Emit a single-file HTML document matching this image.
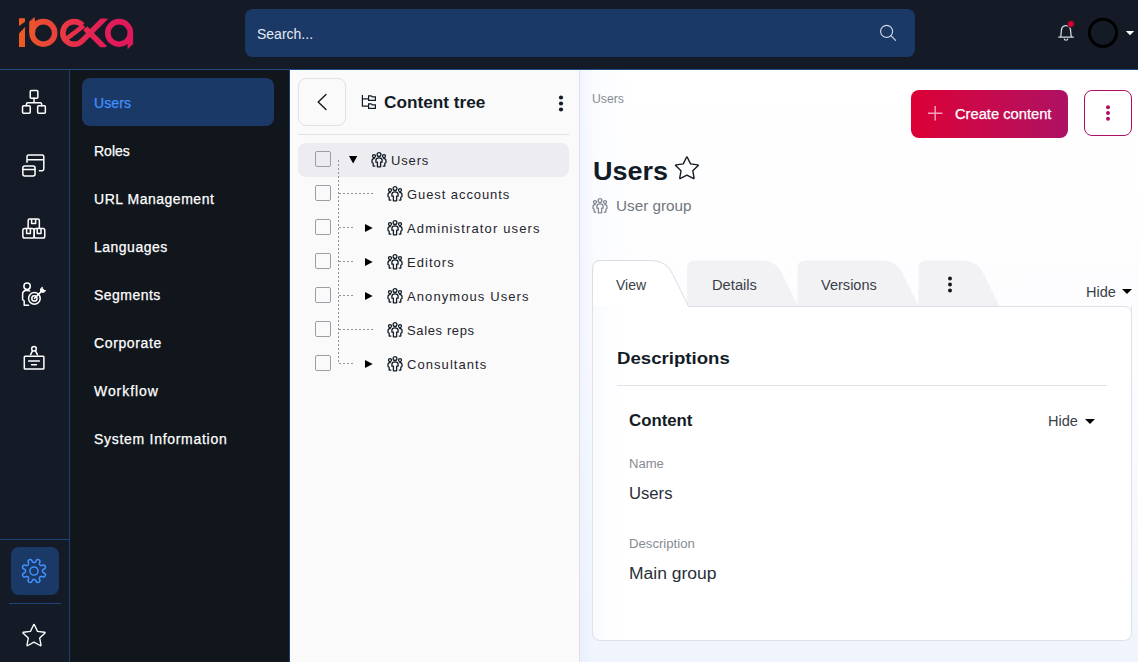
<!DOCTYPE html>
<html><head><meta charset="utf-8">
<style>
*{margin:0;padding:0;box-sizing:border-box}
html,body{width:1138px;height:662px;overflow:hidden;background:#fff}
body{font-family:"Liberation Sans",sans-serif;position:relative;color:#131c26}
.a{position:absolute;white-space:nowrap}
#hdr{left:0;top:0;width:1138px;height:69px;background:#151b26}
#hline{left:0;top:69px;width:1138px;height:1px;background:#224b82}
#search{left:245px;top:9px;width:670px;height:48px;border-radius:8px;background:#1b3966}
#search .t{left:12px;top:16px;font-size:14px;color:#e6eaf2;line-height:18px}
#col1{left:0;top:70px;width:69px;height:592px;background:#151b26}
#col1b{left:69px;top:70px;width:1px;height:592px;background:#1d3f6e}
#col2{left:70px;top:70px;width:219px;height:592px;background:#11161d}
#col2b{left:289px;top:70px;width:1px;height:592px;background:#1d3f6e}
.mi{left:94px;font-size:14px;color:#fff;line-height:18px;-webkit-text-stroke:0.25px #fff}
#act{left:82px;top:78px;width:192px;height:48px;border-radius:8px;background:#1b3966}
#tree{left:290px;top:70px;width:289px;height:592px;background:#fafafa}
#treeb{left:579px;top:70px;width:1px;height:592px;background:#e0e0e8}
#main{left:580px;top:70px;width:558px;height:592px;background:linear-gradient(to right,rgba(228,236,252,0.55) 0px,rgba(240,245,254,0.3) 14px,rgba(255,255,255,0) 50px),linear-gradient(to bottom,#ffffff 0%,#fdfdff 45%,#f0f5fd 100%)}
#back{left:298px;top:78px;width:48px;height:48px;border:1px solid #e0e0e8;border-radius:8px;background:#fafafa}
.ct{left:384px;top:92px;font-size:16px;font-weight:bold;line-height:20px;color:#131c26}
#tdiv{left:298px;top:134px;width:271px;height:1px;background:#e0e0e8}
#sel{left:298px;top:143px;width:271px;height:34px;border-radius:8px;background:#ededf1}
.cb{width:16px;height:16px;border:1px solid #9a9ea6;border-radius:2px;left:315px}
.tt{font-size:14px;line-height:18px;color:#2a3038}
.bc{left:592px;top:90px;font-size:12px;color:#878b93;line-height:16px}
.h1{left:592px;top:154px;font-size:26px;font-weight:bold;color:#131c26;line-height:30px;letter-spacing:0.2px}
.sub{left:616px;top:197px;font-size:14px;color:#71767e;line-height:18px}
#create{left:911px;top:90px;width:157px;height:48px;border-radius:8px;background:linear-gradient(90deg,#dc0036 0%,#c60b4e 50%,#ae1164 100%)}
#create .t{left:44px;top:15px;font-size:14px;color:#fff;line-height:18px;-webkit-text-stroke:0.25px #fff}
#more{left:1084px;top:90px;width:48px;height:46px;border:1px solid #ae1164;border-radius:8px;background:#fff}
#panel{left:592px;top:306px;width:540px;height:335px;border:1px solid #e0e0e8;border-top:none;border-radius:0 0 8px 8px;background:linear-gradient(to right,#f8fafe 0px,#fcfdff 14px,#fff 30px)}
.tab{font-size:14px;line-height:18px;color:#3a3f47}
.hide{font-size:14px;line-height:18px;color:#3a3f47}
.h2{left:617px;top:348px;font-size:17px;font-weight:bold;line-height:20px;color:#131c26}
#pdiv{left:617px;top:385px;width:490px;height:1px;background:#e0e0e8}
.h3{left:629px;top:411px;font-size:16px;font-weight:bold;line-height:20px;color:#131c26}
.lbl{left:629px;font-size:12px;line-height:16px;color:#878b93}
.val{left:629px;font-size:16px;line-height:20px;color:#2a3038}
</style></head><body>
<div class="a" id="hdr"></div><div class="a" id="hline"></div>
<div class="a" id="search"><div class="a t">Search...</div></div>
<div class="a" id="col1"></div><div class="a" id="col1b"></div><div class="a" id="col2"></div><div class="a" id="col2b"></div>
<div class="a" id="act"></div>
<div class="a" style="left:94px;top:94px;font-size:14px;line-height:18px;color:#4191ff;font-weight:normal;-webkit-text-stroke:0.25px #4191ff;letter-spacing:0.11px">Users</div>
<div class="a" style="left:94px;top:142px;font-size:14px;line-height:18px;color:#ffffff;font-weight:normal;-webkit-text-stroke:0.25px #ffffff;letter-spacing:0.0px">Roles</div>
<div class="a" style="left:94px;top:190px;font-size:14px;line-height:18px;color:#ffffff;font-weight:normal;-webkit-text-stroke:0.25px #ffffff;letter-spacing:0.52px">URL Management</div>
<div class="a" style="left:94px;top:238px;font-size:14px;line-height:18px;color:#ffffff;font-weight:normal;-webkit-text-stroke:0.25px #ffffff;letter-spacing:0.49px">Languages</div>
<div class="a" style="left:94px;top:286px;font-size:14px;line-height:18px;color:#ffffff;font-weight:normal;-webkit-text-stroke:0.25px #ffffff;letter-spacing:0.47px">Segments</div>
<div class="a" style="left:94px;top:334px;font-size:14px;line-height:18px;color:#ffffff;font-weight:normal;-webkit-text-stroke:0.25px #ffffff;letter-spacing:0.63px">Corporate</div>
<div class="a" style="left:94px;top:382px;font-size:14px;line-height:18px;color:#ffffff;font-weight:normal;-webkit-text-stroke:0.25px #ffffff;letter-spacing:0.93px">Workflow</div>
<div class="a" style="left:94px;top:430px;font-size:14px;line-height:18px;color:#ffffff;font-weight:normal;-webkit-text-stroke:0.25px #ffffff;letter-spacing:0.71px">System Information</div>
<div class="a" id="tree"></div><div class="a" id="treeb"></div><div class="a" id="main"></div>
<svg class="a" style="left:0;top:0" width="1138" height="70" viewBox="0 0 1138 70">
<defs>
<linearGradient id="lg" x1="19" y1="0" x2="133" y2="0" gradientUnits="userSpaceOnUse">
<stop offset="0" stop-color="#ec5b24"/><stop offset="0.3" stop-color="#e9433b"/><stop offset="0.5" stop-color="#e62e4c"/><stop offset="0.75" stop-color="#e21c58"/><stop offset="1" stop-color="#e0175c"/>
</linearGradient>
<clipPath id="xc"><rect x="0" y="18.4" width="140" height="28.8"/></clipPath>
</defs>
<g fill="url(#lg)">
<polygon points="19,18.2 25,18.2 25,21.7 19,26"/>
<polygon points="19,33.4 25,27 25,47 19,47"/>
<polygon points="29.2,33 29.2,21.7 34.5,16.9 35.3,22.3 35.3,33"/>
<polygon points="127.6,33 133.1,33 133.1,44 127.6,49.3 127.6,44"/>
</g>
<g fill="none" stroke="url(#lg)" stroke-width="5.6">
<circle cx="43.4" cy="32.9" r="11.3"/>
<circle cx="119.1" cy="32.9" r="11.3"/>
<path d="M82.4,25.2 A11.3,11.3 0 1 0 82.2,40.9 L106,17" clip-path="url(#xc)"/>
<path d="M65,40 L83.8,25.6" stroke-width="4.6"/>
<path d="M85.2,28.3 L105,48" clip-path="url(#xc)"/>
</g>
<circle cx="886.6" cy="31.4" r="6.0" fill="none" stroke="#d0d6e0" stroke-width="1.15"/>
<path d="M890.9,35.7 L895.6,40.4" stroke="#d0d6e0" stroke-width="1.15" stroke-linecap="round"/>
<path d="M1058.3,37.1 H1073.8 M1060.6,37 C1061.3,34.5 1061.2,31 1061.6,29 C1062.2,26.6 1063.8,25.6 1066,25.6 C1068.2,25.6 1069.8,26.6 1070.4,29 C1070.8,31 1070.7,34.5 1071.4,37" fill="none" stroke="#d3d6db" stroke-width="1.3"/>
<path d="M1064.2,38.4 A1.8,1.8 0 0 0 1067.8,38.4" fill="none" stroke="#d3d6db" stroke-width="1.2"/>
<circle cx="1070.9" cy="24" r="3.4" fill="#db0032" stroke="#151b26" stroke-width="0.8"/>
<circle cx="1103" cy="32.8" r="13.6" fill="none" stroke="#000" stroke-width="3"/>
<polygon points="1125.8,31 1134.2,31 1130,35.2" fill="#fff"/>
</svg>
<svg class="a" style="left:0;top:0" width="70" height="662" viewBox="0 0 70 662">
<g fill="none" stroke="#fff" stroke-width="1.5" stroke-linecap="round" stroke-linejoin="round">
<rect x="30.25" y="90.55" width="7.6" height="7.6" rx="1"/>
<rect x="22.55" y="105.65" width="7.7" height="7.6" rx="1"/>
<rect x="37.65" y="105.65" width="7.7" height="7.6" rx="1"/>
<path d="M34,98.15 V102.8 M26.4,105.65 V104.3 Q26.4,102.8 27.9,102.8 H40.2 Q41.7,102.8 41.7,104.3 V105.65"/>
<path d="M27,162.3 V156.6 Q27,154.9 28.7,154.9 H42.1 Q43.8,154.9 43.8,156.6 V169.1 Q43.8,170.8 42.1,170.8 H39.4 M27,159.8 H43.8"/>
<rect x="22.85" y="165.95" width="12.2" height="10" rx="2"/>
<path d="M22.85,169.6 H35.05"/>
<path d="M28.15,228 V220.5 Q28.15,218.95 29.7,218.95 H37.8 Q39.35,218.95 39.35,220.5 V228 M31.6,218.95 V223.6 H35.6 V218.95"/>
<rect x="22.85" y="228.55" width="11.35" height="9.4" rx="1.8"/>
<rect x="34.2" y="228.55" width="10.55" height="9.4" rx="1.8"/>
<path d="M26.6,228.55 V233.4 H30.4 V228.55 M37.2,228.55 V233.4 H41 V228.55"/>
<circle cx="27.1" cy="286.2" r="3.2"/>
<path d="M29.6,290.9 Q27.5,290.2 25.4,290.6 Q22.6,291.2 22.6,294 V299.2 Q22.6,300.2 24.2,300.9 V305.2 H28.6"/>
<circle cx="34.4" cy="298.4" r="5.8"/>
<circle cx="34.4" cy="298.4" r="2.6"/>
<path d="M34.4,298.4 L43.2,289.6 M43.9,292 L40.8,292 L40.8,288.9 M45.2,290.7 L42.1,290.7 L42.1,287.6"/>
<rect x="24.3" y="356.2" width="19.6" height="12.9" rx="0.8"/>
<circle cx="34" cy="348.8" r="2.3"/>
<path d="M32.6,350.7 L30.6,354.6 M35.4,350.7 L37.4,354.6 M28.6,361 H39.4 M31.6,364.8 H36.4"/>
<path d="M33.51,625.03 Q34.00,624.00 34.49,625.03 L37.53,631.35 L44.47,632.28 Q45.60,632.43 44.78,633.22 L39.71,638.05 L40.97,644.95 Q41.17,646.07 40.17,645.53 L34.00,642.20 L27.83,645.53 Q26.83,646.07 27.03,644.95 L28.29,638.05 L23.22,633.22 Q22.40,632.43 23.53,632.28 L30.47,631.35 Z" stroke-width="1.35"/>
</g>
<path d="M0,539.5 H69" stroke="#1f4478" stroke-width="1"/>
<rect x="11" y="547" width="48" height="48" rx="8" fill="#1b3966"/>
<path d="M9,603.5 H61" stroke="#1f4478" stroke-width="1"/>
<path d="M34.00,562.60 L34.22,562.58 L34.44,562.54 L34.67,562.45 L34.91,562.33 L35.16,562.17 L35.44,561.93 L35.75,561.55 L36.28,560.25 L36.67,559.90 L37.03,559.71 L37.38,559.60 L37.72,559.56 L38.05,559.57 L38.37,559.63 L38.67,559.73 L38.95,559.87 L39.22,560.06 L39.46,560.28 L39.67,560.55 L39.85,560.88 L39.97,561.26 L39.98,561.78 L39.44,563.08 L39.40,563.57 L39.42,563.93 L39.48,564.23 L39.57,564.48 L39.67,564.70 L39.80,564.89 L39.94,565.06 L40.11,565.20 L40.30,565.33 L40.52,565.43 L40.77,565.52 L41.07,565.58 L41.43,565.60 L41.92,565.56 L43.22,565.02 L43.74,565.03 L44.12,565.15 L44.45,565.33 L44.72,565.54 L44.94,565.78 L45.13,566.05 L45.27,566.33 L45.37,566.63 L45.43,566.95 L45.44,567.28 L45.40,567.62 L45.29,567.97 L45.10,568.33 L44.75,568.72 L43.45,569.25 L43.07,569.56 L42.83,569.84 L42.67,570.09 L42.55,570.33 L42.46,570.56 L42.42,570.78 L42.40,571.00 L42.42,571.22 L42.46,571.44 L42.55,571.67 L42.67,571.91 L42.83,572.16 L43.07,572.44 L43.45,572.75 L44.75,573.28 L45.10,573.67 L45.29,574.03 L45.40,574.38 L45.44,574.72 L45.43,575.05 L45.37,575.37 L45.27,575.67 L45.13,575.95 L44.94,576.22 L44.72,576.46 L44.45,576.67 L44.12,576.85 L43.74,576.97 L43.22,576.98 L41.92,576.44 L41.43,576.40 L41.07,576.42 L40.77,576.48 L40.52,576.57 L40.30,576.67 L40.11,576.80 L39.94,576.94 L39.80,577.11 L39.67,577.30 L39.57,577.52 L39.48,577.77 L39.42,578.07 L39.40,578.43 L39.44,578.92 L39.98,580.22 L39.97,580.74 L39.85,581.12 L39.67,581.45 L39.46,581.72 L39.22,581.94 L38.95,582.13 L38.67,582.27 L38.37,582.37 L38.05,582.43 L37.72,582.44 L37.38,582.40 L37.03,582.29 L36.67,582.10 L36.28,581.75 L35.75,580.45 L35.44,580.07 L35.16,579.83 L34.91,579.67 L34.67,579.55 L34.44,579.46 L34.22,579.42 L34.00,579.40 L33.78,579.42 L33.56,579.46 L33.33,579.55 L33.09,579.67 L32.84,579.83 L32.56,580.07 L32.25,580.45 L31.72,581.75 L31.33,582.10 L30.97,582.29 L30.62,582.40 L30.28,582.44 L29.95,582.43 L29.63,582.37 L29.33,582.27 L29.05,582.13 L28.78,581.94 L28.54,581.72 L28.33,581.45 L28.15,581.12 L28.03,580.74 L28.02,580.22 L28.56,578.92 L28.60,578.43 L28.58,578.07 L28.52,577.77 L28.43,577.52 L28.33,577.30 L28.20,577.11 L28.06,576.94 L27.89,576.80 L27.70,576.67 L27.48,576.57 L27.23,576.48 L26.93,576.42 L26.57,576.40 L26.08,576.44 L24.78,576.98 L24.26,576.97 L23.88,576.85 L23.55,576.67 L23.28,576.46 L23.06,576.22 L22.87,575.95 L22.73,575.67 L22.63,575.37 L22.57,575.05 L22.56,574.72 L22.60,574.38 L22.71,574.03 L22.90,573.67 L23.25,573.28 L24.55,572.75 L24.93,572.44 L25.17,572.16 L25.33,571.91 L25.45,571.67 L25.54,571.44 L25.58,571.22 L25.60,571.00 L25.58,570.78 L25.54,570.56 L25.45,570.33 L25.33,570.09 L25.17,569.84 L24.93,569.56 L24.55,569.25 L23.25,568.72 L22.90,568.33 L22.71,567.97 L22.60,567.62 L22.56,567.28 L22.57,566.95 L22.63,566.63 L22.73,566.33 L22.87,566.05 L23.06,565.78 L23.28,565.54 L23.55,565.33 L23.88,565.15 L24.26,565.03 L24.78,565.02 L26.08,565.56 L26.57,565.60 L26.93,565.58 L27.23,565.52 L27.48,565.43 L27.70,565.33 L27.89,565.20 L28.06,565.06 L28.20,564.89 L28.33,564.70 L28.43,564.48 L28.52,564.23 L28.58,563.93 L28.60,563.57 L28.56,563.08 L28.02,561.78 L28.03,561.26 L28.15,560.88 L28.33,560.55 L28.54,560.28 L28.78,560.06 L29.05,559.87 L29.33,559.73 L29.63,559.63 L29.95,559.57 L30.28,559.56 L30.62,559.60 L30.97,559.71 L31.33,559.90 L31.72,560.25 L32.25,561.55 L32.56,561.93 L32.84,562.17 L33.09,562.33 L33.33,562.45 L33.56,562.54 L33.78,562.58 L34.00,562.60Z" fill="none" stroke="#4191ff" stroke-width="1.5" stroke-linejoin="round"/>
<circle cx="34" cy="571" r="4.1" fill="none" stroke="#4191ff" stroke-width="1.5"/>
</svg>
<div class="a" id="back"></div>
<div class="a" id="tdiv"></div><div class="a" id="sel"></div>
<div class="a" style="left:384px;top:93px;font-size:16px;line-height:20px;color:#131c26;font-weight:bold;transform:scaleX(1.075);transform-origin:0 0">Content tree</div>
<div class="a cb" style="top:151px"></div>
<div class="a" style="left:391px;top:152px;font-size:13px;line-height:17px;color:#1f252d;font-weight:normal;letter-spacing:0.84px">Users</div>
<div class="a cb" style="top:185px"></div>
<div class="a" style="left:407px;top:186px;font-size:13px;line-height:17px;color:#1f252d;font-weight:normal;letter-spacing:0.92px">Guest accounts</div>
<div class="a cb" style="top:219px"></div>
<div class="a" style="left:407px;top:220px;font-size:13px;line-height:17px;color:#1f252d;font-weight:normal;letter-spacing:1.14px">Administrator users</div>
<div class="a cb" style="top:253px"></div>
<div class="a" style="left:407px;top:254px;font-size:13px;line-height:17px;color:#1f252d;font-weight:normal;letter-spacing:1.04px">Editors</div>
<div class="a cb" style="top:287px"></div>
<div class="a" style="left:407px;top:288px;font-size:13px;line-height:17px;color:#1f252d;font-weight:normal;letter-spacing:1.09px">Anonymous Users</div>
<div class="a cb" style="top:321px"></div>
<div class="a" style="left:407px;top:322px;font-size:13px;line-height:17px;color:#1f252d;font-weight:normal;letter-spacing:0.63px">Sales reps</div>
<div class="a cb" style="top:355px"></div>
<div class="a" style="left:407px;top:356px;font-size:13px;line-height:17px;color:#1f252d;font-weight:normal;letter-spacing:1.06px">Consultants</div>
<div class="a" style="left:592px;top:91px;font-size:12px;line-height:16px;color:#878b93;font-weight:normal;transform:scaleX(1.02);transform-origin:0 0">Users</div>
<div class="a" style="left:593px;top:157px;font-size:25px;line-height:29px;color:#131c26;font-weight:bold;transform:scaleX(1.08);transform-origin:0 0">Users</div>
<div class="a" style="left:616px;top:197px;font-size:14px;line-height:18px;color:#71767e;font-weight:normal;transform:scaleX(1.09);transform-origin:0 0">User group</div>
<div class="a" id="create"></div>
<div class="a" style="left:955px;top:105px;font-size:14px;line-height:18px;color:#ffffff;font-weight:normal;transform:scaleX(1.05);transform-origin:0 0;-webkit-text-stroke:0.25px #fff">Create content</div>
<div class="a" id="more"></div>
<div class="a" id="panel"></div>
<svg class="a" style="left:0;top:0" width="1138" height="662" viewBox="0 0 1138 662">
<path d="M326,94.5 L318.2,102 L326,109.5" fill="none" stroke="#131c26" stroke-width="1.4" stroke-linecap="round" stroke-linejoin="round"/>
<g fill="none" stroke="#131c26" stroke-width="1.2"><path d="M362.4,95 V106.2 H368.3 M362.4,98.8 H368.3"/><path d="M368.6,100.4 V95.8 H371.2 L372.2,96.8 H375.4 V100.4 Z M368.6,108.4 V103.8 H371.2 L372.2,104.8 H375.4 V108.4 Z"/></g>
<g fill="#131c26"><circle cx="561" cy="97.5" r="2.1"/><circle cx="561" cy="103.5" r="2.1"/><circle cx="561" cy="109.5" r="2.1"/></g>
<g stroke="#8f939b" stroke-width="1" stroke-dasharray="2 2" fill="none">
<path d="M338.5,160 V364"/>
<path d="M339,193.5 H373"/>
<path d="M339,227.5 H354"/>
<path d="M339,261.5 H354"/>
<path d="M339,295.5 H354"/>
<path d="M339,329.5 H373"/>
<path d="M339,363.5 H354"/>
</g>
<polygon points="349,156 357.3,156 353.15,163.4" fill="#000"/>
<g transform="translate(371,152)" fill="none" stroke="#131c26" stroke-width="1.3" stroke-linejoin="round"><circle cx="8" cy="2.6" r="1.9"/><circle cx="3" cy="4.1" r="1.5"/><circle cx="13" cy="4.1" r="1.5"/><path d="M4.9,10.2 V8.3 Q4.9,5.9 8,5.9 Q11.1,5.9 11.1,8.3 V10.2 H9.6 V14.8 H6.4 V10.2 Z"/><path d="M3.8,6.3 Q1,6.5 1,8.6 V10.5 L2.2,11.2 V14.1 H4.3 M12.2,6.3 Q15,6.5 15,8.6 V10.5 L13.8,11.2 V14.1 H11.7"/></g>
<g transform="translate(387,186)" fill="none" stroke="#131c26" stroke-width="1.3" stroke-linejoin="round"><circle cx="8" cy="2.6" r="1.9"/><circle cx="3" cy="4.1" r="1.5"/><circle cx="13" cy="4.1" r="1.5"/><path d="M4.9,10.2 V8.3 Q4.9,5.9 8,5.9 Q11.1,5.9 11.1,8.3 V10.2 H9.6 V14.8 H6.4 V10.2 Z"/><path d="M3.8,6.3 Q1,6.5 1,8.6 V10.5 L2.2,11.2 V14.1 H4.3 M12.2,6.3 Q15,6.5 15,8.6 V10.5 L13.8,11.2 V14.1 H11.7"/></g>
<polygon points="365,224 372.7,228 365,232" fill="#000"/>
<g transform="translate(387,220)" fill="none" stroke="#131c26" stroke-width="1.3" stroke-linejoin="round"><circle cx="8" cy="2.6" r="1.9"/><circle cx="3" cy="4.1" r="1.5"/><circle cx="13" cy="4.1" r="1.5"/><path d="M4.9,10.2 V8.3 Q4.9,5.9 8,5.9 Q11.1,5.9 11.1,8.3 V10.2 H9.6 V14.8 H6.4 V10.2 Z"/><path d="M3.8,6.3 Q1,6.5 1,8.6 V10.5 L2.2,11.2 V14.1 H4.3 M12.2,6.3 Q15,6.5 15,8.6 V10.5 L13.8,11.2 V14.1 H11.7"/></g>
<polygon points="365,258 372.7,262 365,266" fill="#000"/>
<g transform="translate(387,254)" fill="none" stroke="#131c26" stroke-width="1.3" stroke-linejoin="round"><circle cx="8" cy="2.6" r="1.9"/><circle cx="3" cy="4.1" r="1.5"/><circle cx="13" cy="4.1" r="1.5"/><path d="M4.9,10.2 V8.3 Q4.9,5.9 8,5.9 Q11.1,5.9 11.1,8.3 V10.2 H9.6 V14.8 H6.4 V10.2 Z"/><path d="M3.8,6.3 Q1,6.5 1,8.6 V10.5 L2.2,11.2 V14.1 H4.3 M12.2,6.3 Q15,6.5 15,8.6 V10.5 L13.8,11.2 V14.1 H11.7"/></g>
<polygon points="365,292 372.7,296 365,300" fill="#000"/>
<g transform="translate(387,288)" fill="none" stroke="#131c26" stroke-width="1.3" stroke-linejoin="round"><circle cx="8" cy="2.6" r="1.9"/><circle cx="3" cy="4.1" r="1.5"/><circle cx="13" cy="4.1" r="1.5"/><path d="M4.9,10.2 V8.3 Q4.9,5.9 8,5.9 Q11.1,5.9 11.1,8.3 V10.2 H9.6 V14.8 H6.4 V10.2 Z"/><path d="M3.8,6.3 Q1,6.5 1,8.6 V10.5 L2.2,11.2 V14.1 H4.3 M12.2,6.3 Q15,6.5 15,8.6 V10.5 L13.8,11.2 V14.1 H11.7"/></g>
<g transform="translate(387,322)" fill="none" stroke="#131c26" stroke-width="1.3" stroke-linejoin="round"><circle cx="8" cy="2.6" r="1.9"/><circle cx="3" cy="4.1" r="1.5"/><circle cx="13" cy="4.1" r="1.5"/><path d="M4.9,10.2 V8.3 Q4.9,5.9 8,5.9 Q11.1,5.9 11.1,8.3 V10.2 H9.6 V14.8 H6.4 V10.2 Z"/><path d="M3.8,6.3 Q1,6.5 1,8.6 V10.5 L2.2,11.2 V14.1 H4.3 M12.2,6.3 Q15,6.5 15,8.6 V10.5 L13.8,11.2 V14.1 H11.7"/></g>
<polygon points="365,360 372.7,364 365,368" fill="#000"/>
<g transform="translate(387,356)" fill="none" stroke="#131c26" stroke-width="1.3" stroke-linejoin="round"><circle cx="8" cy="2.6" r="1.9"/><circle cx="3" cy="4.1" r="1.5"/><circle cx="13" cy="4.1" r="1.5"/><path d="M4.9,10.2 V8.3 Q4.9,5.9 8,5.9 Q11.1,5.9 11.1,8.3 V10.2 H9.6 V14.8 H6.4 V10.2 Z"/><path d="M3.8,6.3 Q1,6.5 1,8.6 V10.5 L2.2,11.2 V14.1 H4.3 M12.2,6.3 Q15,6.5 15,8.6 V10.5 L13.8,11.2 V14.1 H11.7"/></g>
<g transform="translate(592,198)" fill="none" stroke="#858a92" stroke-width="1.3" stroke-linejoin="round"><circle cx="8" cy="2.6" r="1.9"/><circle cx="3" cy="4.1" r="1.5"/><circle cx="13" cy="4.1" r="1.5"/><path d="M4.9,10.2 V8.3 Q4.9,5.9 8,5.9 Q11.1,5.9 11.1,8.3 V10.2 H9.6 V14.8 H6.4 V10.2 Z"/><path d="M3.8,6.3 Q1,6.5 1,8.6 V10.5 L2.2,11.2 V14.1 H4.3 M12.2,6.3 Q15,6.5 15,8.6 V10.5 L13.8,11.2 V14.1 H11.7"/></g>
<path d="M686.39,157.45 Q686.90,156.40 687.41,157.45 L690.54,163.88 L697.63,164.88 Q698.79,165.04 697.95,165.85 L692.80,170.82 L694.04,177.87 Q694.25,179.01 693.22,178.46 L686.90,175.10 L680.58,178.46 Q679.55,179.01 679.76,177.87 L681.00,170.82 L675.85,165.85 Q675.01,165.04 676.17,164.88 L683.26,163.88 Z" fill="none" stroke="#131c26" stroke-width="1.4" stroke-linejoin="round"/>
<path d="M935.2,106 V120.4 M928,113.2 H942.4" stroke="#f3a0b8" stroke-width="1.5"/>
<g fill="#ae1164"><circle cx="1108" cy="107.2" r="2"/><circle cx="1108" cy="113" r="2"/><circle cx="1108" cy="118.8" r="2"/></g>
</svg>
<svg class="a" style="left:0;top:0" width="1138" height="662" viewBox="0 0 1138 662">
<path d="M687,306.0 V268.5 Q687,260.5 695,260.5 H761 Q775.7,260.5 782,273.5 L798,306.0 Z" fill="#f2f2f5"/>
<path d="M797.5,306.0 V268.5 Q797.5,260.5 805.5,260.5 H881.5 Q896.2,260.5 902.5,273.5 L918.5,306.0 Z" fill="#f2f2f5"/>
<path d="M918.4,306.0 V268.5 Q918.4,260.5 926.4,260.5 H962.4 Q977.1,260.5 983.4,273.5 L999.4,306.0 Z" fill="#f2f2f5"/>
<path d="M592.5,306.0 V268.5 Q592.5,260.5 600.5,260.5 H651.3 Q666.0,260.5 672.3,273.5 L688.3,306.0 Z" fill="#fff"/>
<path d="M592.5,306.0 V268.5 Q592.5,260.5 600.5,260.5 H651.3 Q666.0,260.5 672.3,273.5 L688.3,306.0" fill="none" stroke="#dcdce4" stroke-width="1"/>
<path d="M688,306.5 H1124 Q1131.5,306.5 1131.5,314 V320" fill="none" stroke="#e0e0e8" stroke-width="1"/>
<path d="M592.5,300 V320" stroke="#e0e0e8" stroke-width="1"/>
<g fill="#131c26"><circle cx="950" cy="278.5" r="2"/><circle cx="950" cy="284.5" r="2"/><circle cx="950" cy="290.5" r="2"/></g>
<polygon points="1122,289 1132,289 1127,294" fill="#000"/>
<polygon points="1085,419 1095,419 1090,424" fill="#000"/>
</svg>
<div class="a" style="left:616px;top:276px;font-size:14px;line-height:18px;color:#3a3f47;font-weight:normal">View</div>
<div class="a" style="left:712px;top:276px;font-size:14px;line-height:18px;color:#3a3f47;font-weight:normal;transform:scaleX(1.05);transform-origin:0 0">Details</div>
<div class="a" style="left:821px;top:276px;font-size:14px;line-height:18px;color:#3a3f47;font-weight:normal;transform:scaleX(1.04);transform-origin:0 0">Versions</div>
<div class="a" style="left:1086px;top:283px;font-size:14px;line-height:18px;color:#3a3f47;font-weight:normal;transform:scaleX(1.04);transform-origin:0 0">Hide</div>
<div class="a" style="left:617px;top:348px;font-size:17px;line-height:21px;color:#131c26;font-weight:bold;transform:scaleX(1.095);transform-origin:0 0">Descriptions</div>
<div class="a" id="pdiv"></div>
<div class="a" style="left:629px;top:411px;font-size:16px;line-height:20px;color:#131c26;font-weight:bold;transform:scaleX(1.05);transform-origin:0 0">Content</div>
<div class="a" style="left:1048px;top:412px;font-size:14px;line-height:18px;color:#3a3f47;font-weight:normal;transform:scaleX(1.04);transform-origin:0 0">Hide</div>
<div class="a" style="left:629px;top:456px;font-size:12px;line-height:16px;color:#878b93;font-weight:normal;transform:scaleX(1.09);transform-origin:0 0">Name</div>
<div class="a" style="left:629px;top:484px;font-size:16px;line-height:20px;color:#2a3038;font-weight:normal;transform:scaleX(1.04);transform-origin:0 0">Users</div>
<div class="a" style="left:629px;top:536px;font-size:12px;line-height:16px;color:#878b93;font-weight:normal;transform:scaleX(1.096);transform-origin:0 0">Description</div>
<div class="a" style="left:629px;top:564px;font-size:16px;line-height:20px;color:#2a3038;font-weight:normal;transform:scaleX(1.093);transform-origin:0 0">Main group</div>
</body></html>
